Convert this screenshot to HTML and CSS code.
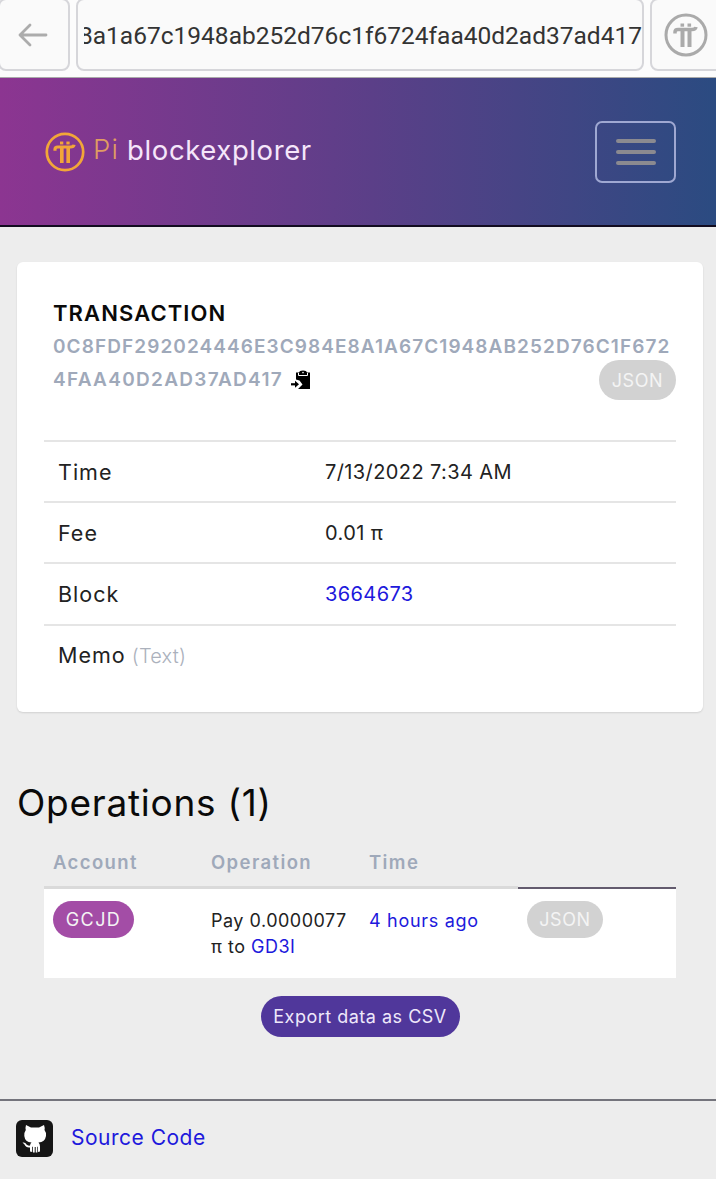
FILE: index.html
```html
<!DOCTYPE html>
<html lang="en">
<head>
  <meta charset="UTF-8">
  <meta name="viewport" content="width=device-width, initial-scale=1">
  <title>Pi blockexplorer</title>
  <link rel="stylesheet" href="styles.css">
</head>
<body>

  <svg width="0" height="0" class="sprite">
    <symbol id="pi-logo" viewBox="0 0 44 44">
      <circle cx="22" cy="22" r="20" fill="none" stroke="currentColor" stroke-width="3"/>
      <path d="M11 20.500v-1.500q0-2.500 3-2.500H28q3.500 0 4-2.500" fill="none" stroke="currentColor" stroke-width="3.500"/>
      <path d="M18.500 17V34M25.500 17V34" fill="none" stroke="currentColor" stroke-width="4"/>
      <rect x="16.500" y="10.500" width="3.600" height="3.200" fill="currentColor"/>
      <rect x="23.500" y="10.500" width="3.600" height="3.200" fill="currentColor"/>
    </symbol>
  </svg>

  <div class="browser-bar">
    <button class="bar-button back">
      <svg width="30" height="24" viewBox="0 0 30 24" fill="none" stroke="#acacac" stroke-width="2.800" stroke-linecap="round" stroke-linejoin="round">
        <path d="M28 12H2M12 2L2 12l10 10"/>
      </svg>
    </button>
    <div class="address"><div class="address-text">8a1a67c1948ab252d76c1f6724faa40d2ad37ad417</div></div>
    <button class="bar-button home"><svg width="44" height="44"><use href="#pi-logo"/></svg></button>
  </div>

  <header class="navbar">
    <a class="brand" href="#">
      <svg width="40" height="40"><use href="#pi-logo"/></svg>
      <span class="brand-pi">Pi</span>
      <span class="brand-name">blockexplorer</span>
    </a>
    <button class="menu-toggle"><span></span><span></span><span></span></button>
  </header>

  <main>
    <section class="card">
      <div class="card-header">
        <h3>Transaction</h3>
        <div class="hash">0c8fdf292024446e3c984e8a1a67c1948ab252d76c1f672</div>
        <div class="hash-row">
          <span class="hash last">4faa40d2ad37ad417</span>
          <svg class="copy" width="20" height="20" viewBox="0 0 20 20">
            <path d="M5 2.500H8Q8.500 .5 12 .5Q15.500 .5 16 2.500H19V19H7L11.500 14.500L8.500 10.500L5 9.500Z" fill="#000"/>
            <path d="M7.500 3V5.500H16.500V3" fill="none" stroke="#fff" stroke-width="1"/>
            <circle cx="12" cy="2.600" r=".8" fill="#fff"/>
            <path d="M0 14.300H5" stroke="#000" stroke-width="2.200"/>
            <path d="M4 10.800L8 14.300L4 17.800Z" fill="#000"/>
          </svg>
          <a class="badge json" href="#">JSON</a>
        </div>
      </div>
      <div class="details">
        <div class="row"><span>Time</span><span class="value">7/13/2022 7:34 AM</span></div>
        <div class="row"><span>Fee</span><span class="value">0.01 π</span></div>
        <div class="row"><span>Block</span><a class="value" href="#">3664673</a></div>
        <div class="row"><span>Memo <small>(Text)</small></span></div>
      </div>
    </section>

    <h2>Operations (1)</h2>

    <table class="operations">
      <thead>
        <tr><th>Account</th><th>Operation</th><th>Time</th><th class="empty"></th></tr>
      </thead>
      <tbody>
        <tr>
          <td><a class="badge account" href="#">GCJD</a></td>
          <td class="pay">Pay 0.0000077<br>π to <a href="#">GD3I</a></td>
          <td><a class="ago" href="#">4 hours ago</a></td>
          <td><a class="badge json" href="#">JSON</a></td>
        </tr>
      </tbody>
    </table>

    <button class="export">Export data as CSV</button>
  </main>

  <footer>
    <svg width="37" height="37" viewBox="0 0 37 37">
      <rect width="37" height="37" rx="6" fill="#161616"/>
      <path d="M10 5L15 7.500H23L28 5Q29 7.500 28.500 10Q30.500 12.500 30 16Q29 22 22.500 22.500Q24 24 24 26.500V31.500L22 32V27L21.300 26.500V32.500H19.700V27H18.700V32.500H17V26.500L16.200 27V32L14 31.500V27.500Q10 28 8.500 24.500L6.500 22.500Q9.500 22 10.500 24.500Q12 26 14 25.500Q14.200 23.500 15.500 22.500Q9 22 8.300 16Q8 12.500 9.800 10Q9.200 7.500 10 5Z" fill="#fff"/>
    </svg>
    <a href="#">Source Code</a>
  </footer>

</body>
</html>
```
FILE: styles.css
```css
* {
  box-sizing: border-box;
}

body {
  margin: 0;
  background: #ededed;
  color: #222;
  font-family: Inter, 'Open Sans', sans-serif;
  font-size: 20px;
  height: 1179px;
  display: flex;
  flex-direction: column;
  overflow: hidden;
}

a {
  color: #2018dc;
  text-decoration: none;
}

button {
  font-family: inherit;
  padding: 0;
}

.sprite {
  display: none;
}

/* browser bar */
.browser-bar {
  display: flex;
  gap: 6px;
  height: 78px;
  background: #fcfcfc;
  border-bottom: 1px solid #aaa;
  overflow: hidden;
}

.bar-button,
.address {
  flex: none;
  height: 73px;
  margin-top: -2px;
  border: 2px solid #d6d6da;
  border-radius: 8px;
  background: #fafafa;
  display: flex;
  align-items: center;
}

.back {
  width: 72px;
  margin-left: -2px;
  padding-left: 18px;
}

.address {
  width: 568px;
  padding: 2px 0 0 6px;
}

.address-text {
  flex: 1;
  display: flex;
  justify-content: flex-end;
  overflow: hidden;
  font: 24.5px Roboto, sans-serif;
  color: #333;
}

.home {
  width: 80px;
  padding-left: 12px;
  color: #aaa;
}

/* header */
.navbar {
  display: flex;
  align-items: center;
  justify-content: space-between;
  height: 149px;
  padding: 0 40px 0 45px;
  border-bottom: 2px solid #120c20;
  background: linear-gradient(to right, #8c3591, #5b3f88 52%, #2b4b81);
}

.brand {
  display: flex;
  align-items: center;
  color: #f2a638;
  font-size: 27.5px;
}

.brand-pi {
  margin: -6px 8px 0 8px;
  color: #e09c62;
  font-weight: 300;
  letter-spacing: 1.2px;
}

.brand-name {
  color: #f5e6fa;
  margin-top: -4px;
  letter-spacing: .6px;
}

.menu-toggle {
  width: 81px;
  height: 62px;
  border: 2px solid #9fa8d2;
  border-radius: 7px;
  background: none;
  display: flex;
  flex-direction: column;
  align-items: center;
  justify-content: center;
  gap: 7px;
}

.menu-toggle span {
  width: 40px;
  height: 4px;
  border-radius: 2px;
  background: #8b8a90;
}

main {
  display: flex;
  flex-direction: column;
  padding: 35px 13px 0 17px;
}

/* transaction card */
.card {
  height: 450px;
  padding: 34px 27px 0;
  background: #fff;
  border-radius: 6px;
  box-shadow: 0 1px 2px rgba(0, 0, 0, .12);
}

.card-header {
  height: 144px;
  padding-left: 9px;
  text-transform: uppercase;
}

h3 {
  margin: 0;
  color: #0a0a0a;
  font-size: 22px;
  line-height: 34px;
  font-weight: 600;
  letter-spacing: 1.1px;
}

.hash {
  color: #9fa9ba;
  font-size: 19px;
  line-height: 34px;
  font-weight: 600;
  letter-spacing: 1.08px;
  white-space: nowrap;
}

.last {
  letter-spacing: 1.3px;
}

.hash-row {
  display: flex;
  align-items: center;
  height: 32px;
}

.copy {
  margin-left: 8px;
}

.badge {
  display: inline-flex;
  align-items: center;
  justify-content: center;
  color: #f4f4f4;
  font-size: 18px;
  letter-spacing: .6px;
}

.json {
  width: 77px;
  height: 40px;
  margin-left: auto;
  border-radius: 20px;
  background: #d2d2d2;
}

.row {
  display: flex;
  align-items: center;
  height: 61.2px;
  padding-left: 14px;
  border-top: 2px solid #e5e5e5;
}

.row > :first-child {
  width: 267px;
  font-size: 21.5px;
  letter-spacing: 1px;
}

.row > .value {
  letter-spacing: .4px;
}

.row small {
  margin-left: -1px;
  color: #abb1bc;
  font-size: 20px;
  font-weight: 300;
  letter-spacing: .2px;
}

h2 {
  margin: 66px 0 0;
  color: #0a0a0a;
  font-size: 37px;
  line-height: 50px;
  font-weight: 400;
  letter-spacing: .75px;
}

/* operations */
.operations {
  width: 632px;
  margin: 10px 0 0 27px;
  border-collapse: separate;
  border-spacing: 0;
  table-layout: fixed;
}

th {
  height: 51px;
  padding: 0 0 0 9px;
  border-bottom: 3px solid #dadada;
  color: #9fa9ba;
  font-size: 18.5px;
  font-weight: 600;
  letter-spacing: 1.4px;
  text-align: left;
}

th.empty {
  border-bottom: 2px solid #635b6e;
}

td {
  height: 89px;
  padding: 12px 0 0 9px;
  background: #fff;
  font-size: 18px;
  line-height: 26px;
  letter-spacing: .5px;
  vertical-align: top;
}

td .badge {
  height: 37px;
  border-radius: 19px;
}

td .json {
  width: 76px;
}

.account {
  width: 81px;
  background: #a34da6;
  letter-spacing: 1.4px;
}

.pay,
.ago {
  white-space: nowrap;
}

.pay,
td:nth-child(3) {
  padding-top: 19px;
}

.ago {
  letter-spacing: .7px;
}

.export {
  align-self: center;
  width: 199px;
  height: 41px;
  margin-top: 18px;
  border: 0;
  border-radius: 21px;
  background: #50379b;
  color: #eee8fa;
  font-size: 18px;
  letter-spacing: .5px;
}

footer {
  display: flex;
  align-items: center;
  gap: 18px;
  height: 80px;
  margin-top: auto;
  padding: 0 0 4px 16px;
  border-top: 2px solid #74747c;
  font-size: 21px;
  letter-spacing: .5px;
}

footer a {
  margin-top: -2px;
}
```
